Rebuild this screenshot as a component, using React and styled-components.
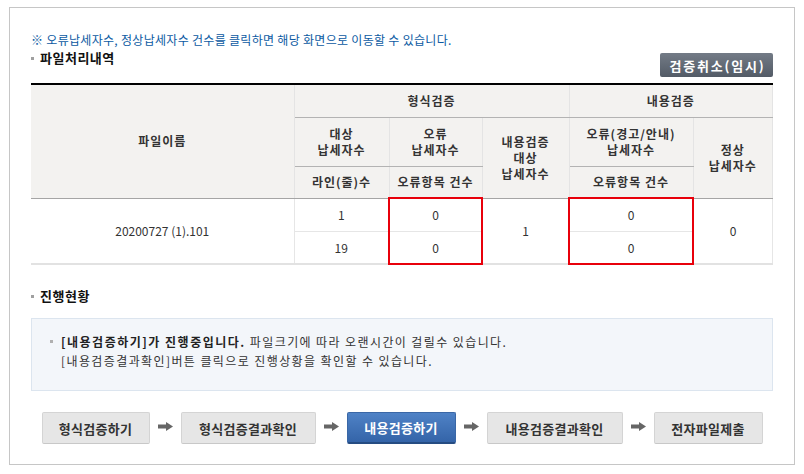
import React from "react";
import styled, { createGlobalStyle } from "styled-components";

const Global = createGlobalStyle`
  html, body { margin: 0; padding: 0; background: #fff; }
  body { font-family: "Noto Sans CJK KR", "Noto Sans", sans-serif; font-size: 12px; color: #333; }
`;

const Frame = styled.div`
  box-sizing: border-box;
  margin: 7px 0 0 9px;
  width: 786px;
  height: 458px;
  border: 1px solid #c6c6c6;
  padding: 24px 21px 0 21px;
`;

const Note = styled.p`
  margin: 0;
  font-size: 12px;
  line-height: 16px;
  color: #0b5aa2;
  letter-spacing: 0.3px;
`;

const TitleRow = styled.div`
  display: flex;
  justify-content: space-between;
  align-items: flex-start;
  margin-top: ${(p) => p.$mt || 0}px;
`;

const Title = styled.h3`
  display: flex;
  align-items: center;
  gap: 6px;
  margin: 0;
  font-size: 13px;
  line-height: 16px;
  font-weight: 700;
  color: #111;
  letter-spacing: 0.5px;
  &::before {
    content: "";
    width: 3px;
    height: 3px;
    background: #a0a0a0;
  }
`;

const CancelButton = styled.button`
  margin-top: 3px;
  width: 113px;
  height: 24px;
  border: 0;
  border-radius: 2px;
  background: linear-gradient(#737b86, #535b66);
  color: #fff;
  font-family: inherit;
  font-size: 13px;
  font-weight: 700;
  letter-spacing: 1.8px;
  padding: 0 0 0 2px;
`;

const Table = styled.table`
  width: 742px;
  margin-top: 6px;
  border-collapse: collapse;
  table-layout: fixed;
  border-top: 2px solid #000;
  border-bottom: 2px solid #e2e2e2;
`;

const Th = styled.th`
  background: #f3f2f0;
  font-size: 12px;
  font-weight: 700;
  color: #333;
  line-height: 16px;
  letter-spacing: 1px;
  padding: 0;
  text-align: center;
  vertical-align: middle;
  border-left: 1px solid #e4e4e4;
  border-right: 1px solid #e4e4e4;
  border-bottom: 1px solid ${(p) => (p.$last ? "#a5a5a5" : "#b3b3b3")};
  &:first-child { border-left: 0; }
`;

const Tr = styled.tr`
  height: ${(p) => p.$h}px;
`;

const Td = styled.td`
  padding: 0;
  text-align: center;
  vertical-align: middle;
  font-size: 12px;
  color: #333;
  border: 1px solid #e6e6e6;
  border-top: ${(p) => (p.$red === "top" ? "2px solid #e8000b" : "1px solid #e6e6e6")};
  border-bottom: ${(p) => (p.$red === "bottom" ? "2px solid #e8000b" : "1px solid #e6e6e6")};
  ${(p) =>
    p.$red &&
    `border-left: 2px solid #e8000b; border-right: 2px solid #e8000b;`}
  &:first-child { border-left: 0; }
`;

const InfoBox = styled.div`
  box-sizing: border-box;
  margin-top: 14px;
  height: 73px;
  background: #f3f6fa;
  border: 1px solid #dce5ef;
  padding: 13px 18px 0 18px;
  display: flex;
  align-items: flex-start;
  gap: 8px;
  &::before {
    content: "";
    flex: none;
    width: 3px;
    height: 3px;
    margin-top: 8px;
    background: #b0b0b0;
  }
`;

const InfoText = styled.div`
  font-size: 12px;
  line-height: 19px;
  color: #333;
  letter-spacing: 1.4px;
  b { font-weight: 700; color: #222; letter-spacing: 1.5px; }
`;

const Steps = styled.div`
  display: flex;
  justify-content: center;
  align-items: center;
  margin-top: 21px;
`;

const Step = styled.div`
  box-sizing: border-box;
  height: 32px;
  width: ${(p) => p.$w}px;
  display: flex;
  align-items: center;
  justify-content: center;
  font-size: 13px;
  font-weight: 700;
  letter-spacing: 0.3px;
  border-radius: 2px;
  ${(p) =>
    p.$active
      ? `background: linear-gradient(#4f82c6, #3464a8);
         color: #fff;
         border: 1px solid #3a67a6;
         border-bottom: 2px solid #264c82;`
      : `background: #e6e6e6;
         color: #333;
         border: 1px solid #d4d4d4;
         border-bottom-color: #c8c8c8;`}
`;

const ArrowWrap = styled.div`
  width: 31px;
  display: flex;
  justify-content: center;
  align-items: center;
  margin-top: -4px;
`;

const Arrow = () => (
  <ArrowWrap>
    <svg width="15" height="9" viewBox="0 0 15 9">
      <rect x="0" y="2.5" width="9" height="4" fill="#666" />
      <polygon points="8,0 15,4.5 8,9" fill="#666" />
    </svg>
  </ArrowWrap>
);

const steps = [
  { label: "형식검증하기", w: 108 },
  { label: "형식검증결과확인", w: 135 },
  { label: "내용검증하기", w: 109, active: true },
  { label: "내용검증결과확인", w: 136 },
  { label: "전자파일제출", w: 109 },
];

export default function App() {
  return (
    <>
      <Global />
      <Frame>
        <Note>※ 오류납세자수, 정상납세자수 건수를 클릭하면 해당 화면으로 이동할 수 있습니다.</Note>
        <TitleRow $mt={2}>
          <Title>파일처리내역</Title>
          <CancelButton>검증취소(임시)</CancelButton>
        </TitleRow>
        <Table>
          <colgroup>
            <col style={{ width: 263 }} />
            <col style={{ width: 95 }} />
            <col style={{ width: 93 }} />
            <col style={{ width: 87 }} />
            <col style={{ width: 124 }} />
            <col />
          </colgroup>
          <thead>
            <Tr $h={33}>
              <Th rowSpan={3} $last>파일이름</Th>
              <Th colSpan={3}>형식검증</Th>
              <Th colSpan={2}>내용검증</Th>
            </Tr>
            <Tr $h={49}>
              <Th>대상<br />납세자수</Th>
              <Th>오류<br />납세자수</Th>
              <Th rowSpan={2} $last>내용검증<br />대상<br />납세자수</Th>
              <Th>오류(경고/안내)<br />납세자수</Th>
              <Th rowSpan={2} $last>정상<br />납세자수</Th>
            </Tr>
            <Tr $h={32}>
              <Th $last>라인(줄)수</Th>
              <Th $last>오류항목 건수</Th>
              <Th $last>오류항목 건수</Th>
            </Tr>
          </thead>
          <tbody>
            <Tr $h={33}>
              <Td rowSpan={2}>20200727 (1).101</Td>
              <Td>1</Td>
              <Td $red="top">0</Td>
              <Td rowSpan={2}>1</Td>
              <Td $red="top">0</Td>
              <Td rowSpan={2}>0</Td>
            </Tr>
            <Tr $h={33}>
              <Td>19</Td>
              <Td $red="bottom">0</Td>
              <Td $red="bottom">0</Td>
            </Tr>
          </tbody>
        </Table>
        <TitleRow $mt={23}>
          <Title>진행현황</Title>
        </TitleRow>
        <InfoBox>
          <InfoText>
            <b>[내용검증하기]가 진행중입니다.</b> 파일크기에 따라 오랜시간이 걸릴수 있습니다.
            <br />
            [내용검증결과확인]버튼 클릭으로 진행상황을 확인할 수 있습니다.
          </InfoText>
        </InfoBox>
        <Steps>
          {steps.map((s, i) => (
            <React.Fragment key={s.label}>
              {i > 0 && <Arrow />}
              <Step $w={s.w} $active={s.active}>{s.label}</Step>
            </React.Fragment>
          ))}
        </Steps>
      </Frame>
    </>
  );
}
